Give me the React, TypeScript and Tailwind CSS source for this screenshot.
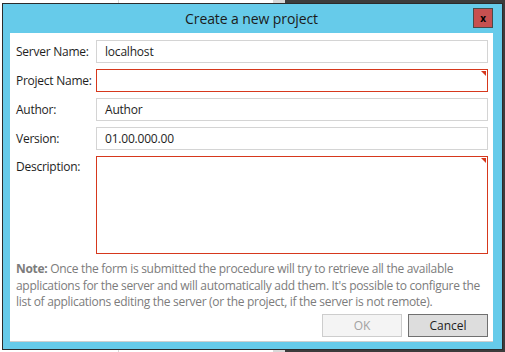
import type { ReactNode } from 'react'

const font = { fontFamily: '"Open Sans", "Noto Sans", sans-serif' }

type FieldRowProps = {
  label: string
  value?: string
  invalid?: boolean
  tall?: boolean
}

function InvalidCorner() {
  return (
    <span className="absolute right-[1px] top-[1px] h-0 w-0 border-l-[5px] border-t-[5px] border-l-transparent border-t-[#d6381d]" />
  )
}

function FieldRow({ label, value, invalid, tall }: FieldRowProps) {
  return (
    <div className={`flex ${tall ? 'items-start' : 'items-center'}`}>
      <div
        className={`w-[80px] shrink-0 whitespace-nowrap text-[12px] tracking-[-0.25px] text-[#1e1e1e] ${
          tall ? 'pt-[2px]' : ''
        }`}
      >
        {label}
      </div>
      <div
        className={`relative flex flex-1 items-center border bg-white px-[8px] text-[12px] tracking-[-0.2px] text-[#1e1e1e] ${
          tall ? 'h-[98px]' : 'h-[23px]'
        } ${invalid ? 'border-[#d6381d]' : 'border-[#d4d4d4]'}`}
      >
        {value}
        {invalid ? <InvalidCorner /> : null}
      </div>
    </div>
  )
}

function DialogButton({ children, disabled }: { children: ReactNode; disabled?: boolean }) {
  return (
    <button
      type="button"
      className={`h-[23px] w-[80px] border text-[12px] ${
        disabled
          ? 'border-[#cdcdcd] bg-[#f4f4f4] text-[#a2a2a2]'
          : 'border-[#707070] bg-[#dddddd] text-[#1e1e1e]'
      }`}
    >
      {children}
    </button>
  )
}

export default function App() {
  return (
    <div
      className="h-[352px] w-[505px] overflow-hidden bg-[linear-gradient(to_right,#ffffff_118px,#d8d8d8_118px,#d8d8d8_119px,#ffffff_119px,#ffffff_273px,#d8d8d8_273px,#d8d8d8_285px,#3c3c3c_285px)] pl-[2px] pt-[3px]"
      style={font}
    >
      <div className="flex h-[347px] w-[501px] flex-col border border-[#2b2b2b] bg-[#66cbea] pb-[7px] pl-[7px] pr-[9px]">
        <div className="relative flex h-[29px] shrink-0 items-center justify-center text-[14px] tracking-[-0.1px] text-[#1b1b1b]">
          Create a new project
          <button
            type="button"
            className="absolute right-0 top-[4px] flex h-[20px] w-[20px] items-center justify-center border border-[#4a4a4a] bg-[#c75050] text-[10px] font-bold leading-none text-black"
          >
            x
          </button>
        </div>

        <div className="flex flex-1 flex-col border-b border-[#cfcfcf] bg-white pb-[4px] pl-[6px] pr-[5px] pt-[7px]">
          <div className="flex flex-col gap-[6px]">
            <FieldRow label="Server Name:" value="localhost" />
            <FieldRow label="Project Name:" invalid />
            <FieldRow label="Author:" value="Author" />
            <FieldRow label="Version:" value="01.00.000.00" />
            <FieldRow label="Description:" invalid tall />
          </div>

          <p className="mt-[7px] text-[12px] leading-[16.5px] tracking-[-0.3px] text-[#7c7c7c]">
            <span className="font-bold">Note:</span> Once the form is submitted the procedure will try
            to retrieve all the available applications for the server and will automatically add
            them. It's possible to configure the list of applications editing the server (or the
            project, if the server is not remote).
          </p>

          <div className="mt-auto flex justify-end gap-[6px]">
            <DialogButton disabled>OK</DialogButton>
            <DialogButton>Cancel</DialogButton>
          </div>
        </div>
      </div>
    </div>
  )
}
